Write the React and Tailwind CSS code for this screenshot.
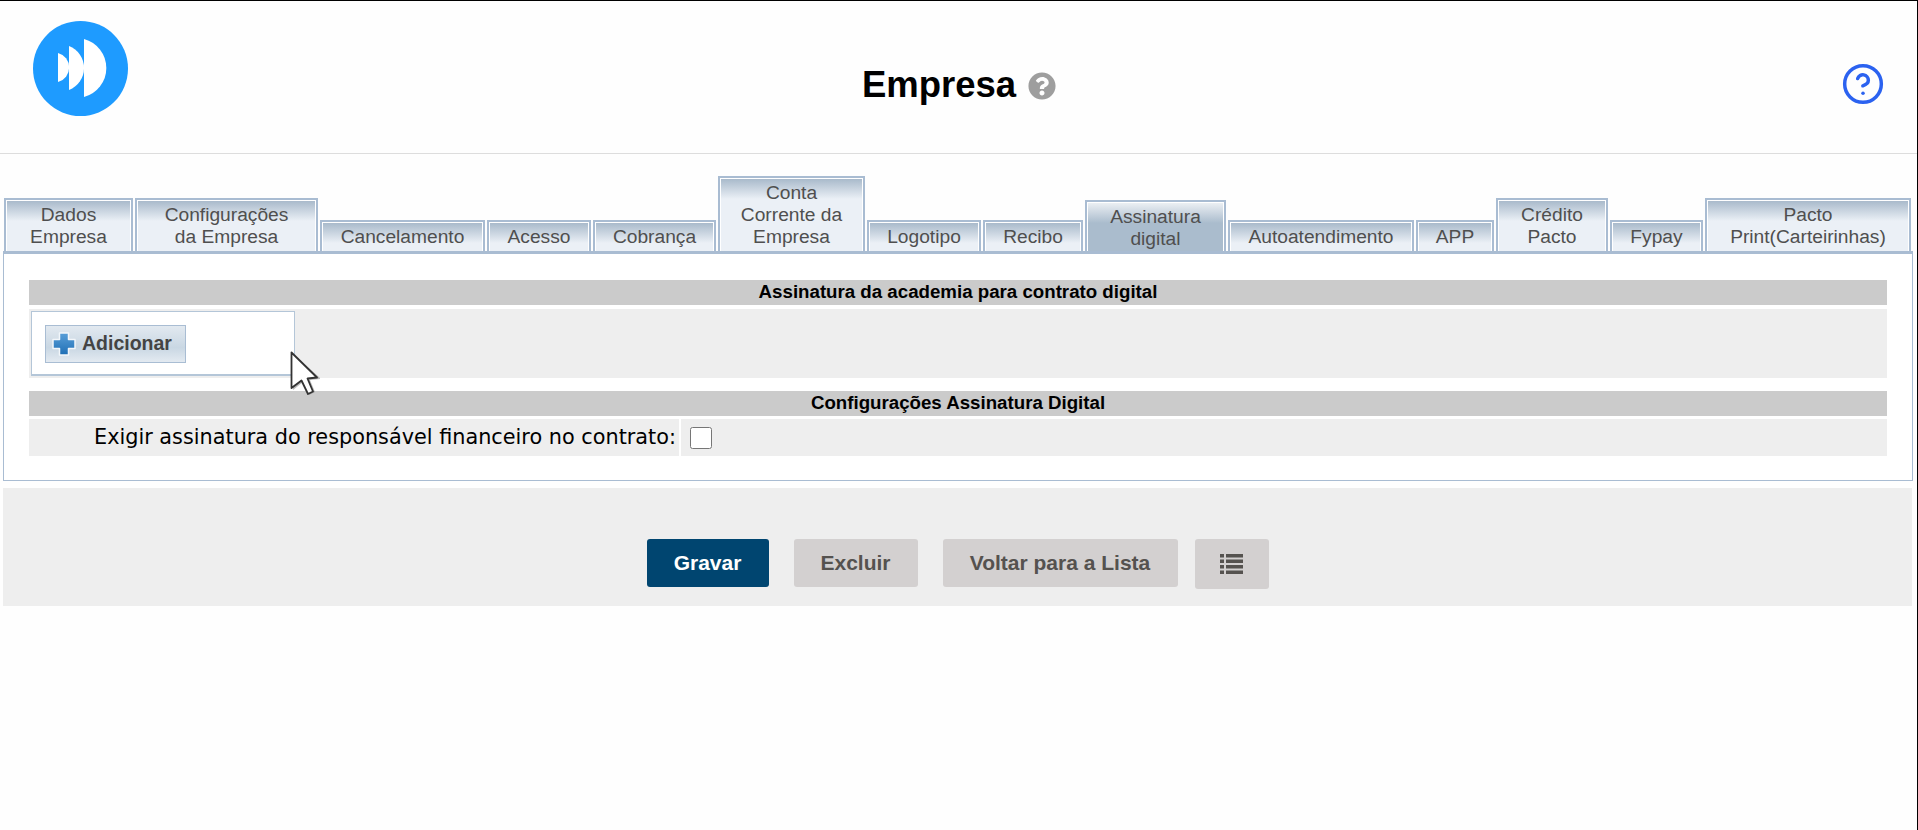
import { CircleHelp } from "lucide-react"
import { FaQuestionCircle } from "react-icons/fa"

const tabs = [
    { lines: ["Dados", "Empresa"], width: "w-[129px]" },
    { lines: ["Configurações", "da Empresa"], width: "w-[183px]" },
    { lines: ["Cancelamento"], width: "w-[165px]" },
    { lines: ["Acesso"], width: "w-[104px]" },
    { lines: ["Cobrança"], width: "w-[123px]" },
    { lines: ["Conta", "Corrente da", "Empresa"], width: "w-[147px]" },
    { lines: ["Logotipo"], width: "w-[114px]" },
    { lines: ["Recibo"], width: "w-[100px]" },
    { lines: ["Assinatura", "digital"], width: "w-[141px]", active: true },
    { lines: ["Autoatendimento"], width: "w-[186px]" },
    { lines: ["APP"], width: "w-[78px]" },
    { lines: ["Crédito", "Pacto"], width: "w-[112px]" },
    { lines: ["Fypay"], width: "w-[93px]" },
    { lines: ["Pacto", "Print(Carteirinhas)"], width: "w-[206px]" },
]

const Logo = () => (
    <svg width="95" height="95" viewBox="0 0 95 95">
        <circle cx="47.5" cy="47.5" r="47.5" fill="#1e9bff" />
        <path d="M25 32 A15 15 0 0 1 25 61 Z" fill="white" />
        <path d="M36 25 A23.6 23.6 0 0 1 36 69 Z" fill="white" />
        <path d="M51 18 A30 30 0 0 1 51 76 Z" fill="white" />
    </svg>
)

const PlusIcon = () => (
    <svg width="24" height="24" viewBox="0 0 24 24">
        <defs>
            <linearGradient id="plusBlue" x1="0" y1="0" x2="0" y2="1">
                <stop offset="0" stopColor="#5a9fd8" />
                <stop offset="1" stopColor="#1f6fb5" />
            </linearGradient>
        </defs>
        <path d="M7.5 1 H16.5 V7.5 H23 V16.5 H16.5 V23 H7.5 V16.5 H1 V7.5 H7.5 Z" fill="url(#plusBlue)" stroke="#f2f6fa" strokeWidth="1.5" strokeLinejoin="round" />
    </svg>
)

const ListIcon = () => (
    <svg width="23" height="20" viewBox="0 0 23 20" fill="#55524f">
        <path d="M0 0h4v3.5H0zM6 0h17v3.5H6zM0 5.5h4V9H0zM6 5.5h17V9H6zM0 11h4v3.5H0zM6 11h17v3.5H6zM0 16.500h4V20H0zM6 16.500h17V20H6z" />
    </svg>
)

const Cursor = () => (
    <svg className="absolute left-[290px] top-[350px]" width="30" height="46" viewBox="0 0 30 46">
        <path d="M3 3 V39 L13 31 L19 44 L25 41 L20 29 L31 28 Z" fill="#8a8a8a" opacity="0.6" />
        <path d="M1.500 1.500 V37 L11.500 29.500 L18 43 L23 40.500 L17.500 27.500 L27 26.500 Z" fill="white" stroke="#333333" strokeWidth="1.8" strokeLinejoin="round" />
    </svg>
)

const SectionBar = ({ children }) => (
    <div className="h-[25px] bg-[#cbcbcb] flex items-center justify-center text-[18.7px] font-bold text-black">
        {children}
    </div>
)

const App = () => {
    return (
        <div className="relative h-[830px] bg-[#fefefe] border-t border-r border-black font-['Liberation_Sans',Arial,sans-serif] overflow-hidden">
            <div className="h-[153px] border-b border-[#dddddd] grid grid-cols-[1fr_auto_1fr] pl-[33px] pr-[32px]">
                <div className="pt-5">
                    <Logo />
                </div>
                <div className="flex items-center gap-3 pt-[17px]">
                    <h1 className="text-[36.5px] font-bold text-black">Empresa</h1>
                    <FaQuestionCircle size={28} className="text-[#9e9e9e]" />
                </div>
                <div className="flex items-center justify-end pt-[14px]">
                    <CircleHelp size={44} strokeWidth={1.9} className="text-[#2b62f0]" />
                </div>
            </div>

            <div className="flex items-end h-[97px] pl-[4px] gap-[2px]">
                {tabs.map((tab) => (
                    <div key={tab.lines[0] + tab.lines.length} className={`${tab.width} shrink-0 border-2 border-b-0 border-[#a9bcd2] bg-white pt-px px-px`}>
                        <div className={tab.active
                            ? "bg-[linear-gradient(#ebeff3,#aabccd_20px)] text-center text-[19.2px] leading-[22px] text-[#4f4f4f] pt-[3px] pb-px"
                            : "bg-[linear-gradient(#a9bacb,#ebf0f6_20px)] text-center text-[19.2px] leading-[22px] text-[#4f4f4f] pt-[3px] pb-[3px]"}>
                            {tab.lines.map((line) => (
                                <div key={line}>{line}</div>
                            ))}
                        </div>
                    </div>
                ))}
            </div>

            <div className="ml-[3px] w-[1910px] h-[230px] border border-t-[3px] border-[#a9bcd2] bg-white px-[25px] pt-[26px]">
                <SectionBar>Assinatura da academia para contrato digital</SectionBar>
                <div className="mt-[4px] h-[69px] bg-[#eeeeee] pl-[2px] pt-[2px]">
                    <div className="w-[264px] h-[65px] bg-white border border-b-2 border-[#b4c6d8] pl-[13px] pt-[13px]">
                        <button className="w-[141px] h-[38px] border border-[#a9bdd3] bg-[linear-gradient(#e2e9f0,#c9d7e3_60%,#e3eaf1)] flex items-center gap-[6px] pl-[6px] text-[19.5px] font-bold text-[#444444]">
                            <PlusIcon />
                            Adicionar
                        </button>
                    </div>
                </div>
                <div className="mt-[13px]">
                    <SectionBar>Configurações Assinatura Digital</SectionBar>
                </div>
                <div className="mt-[3px] h-[37px] flex gap-[2px] text-[20.8px] text-black font-['DejaVu_Sans',sans-serif]">
                    <div className="w-[650px] bg-[#eeeeee] flex items-center justify-end pr-[3px]">
                        Exigir assinatura do responsável financeiro no contrato:
                    </div>
                    <div className="flex-1 bg-[#eeeeee] flex items-center pl-[9px]">
                        <input type="checkbox" className="w-[22px] h-[22px]" />
                    </div>
                </div>
            </div>

            <div className="mt-[7px] ml-[3px] w-[1909px] h-[118px] bg-[#eeeeee] flex items-start justify-center gap-[25px] pt-[51px]">
                <button className="w-[122px] h-[48px] rounded-[3px] bg-[#004570] text-white text-[21px] font-bold">Gravar</button>
                <button className="w-[124px] h-[48px] rounded-[3px] bg-[#d3d0d0] text-[#55524f] text-[21px] font-bold">Excluir</button>
                <button className="w-[235px] h-[48px] rounded-[3px] bg-[#d3d0d0] text-[#55524f] text-[21px] font-bold">Voltar para a Lista</button>
                <button className="-ml-[8px] w-[74px] h-[50px] rounded-[3px] bg-[#d3d0d0] flex items-center justify-center">
                    <ListIcon />
                </button>
            </div>

            <Cursor />
        </div>
    )
}

export default App
